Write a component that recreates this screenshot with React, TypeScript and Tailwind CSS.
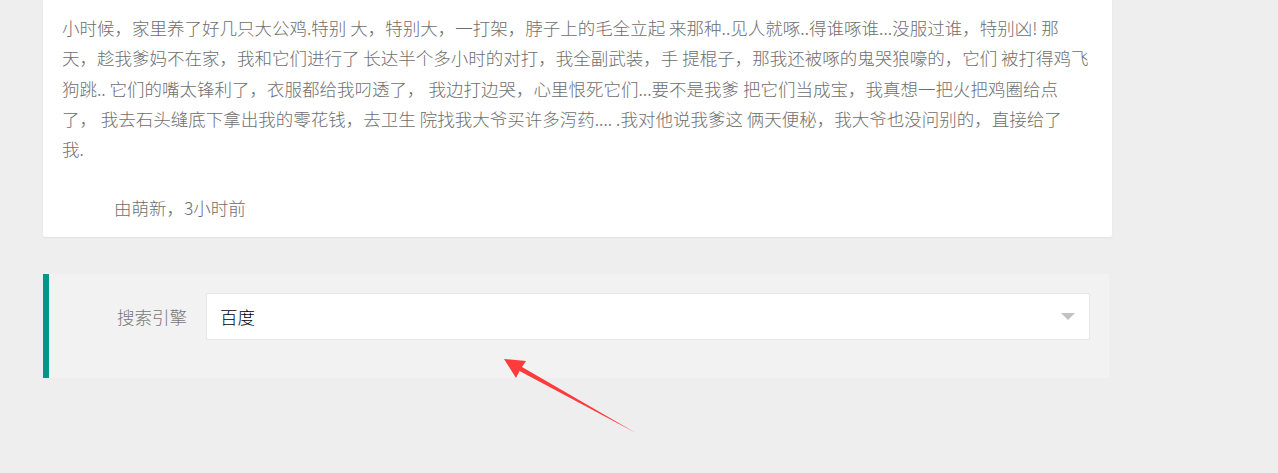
import React from "react";

const lines = [
  "小时候，家里养了好几只大公鸡.特别 大，特别大，一打架，脖子上的毛全立起 来那种..见人就啄..得谁啄谁...没服过谁，特别凶! 那",
  "天，趁我爹妈不在家，我和它们进行了 长达半个多小时的对打，我全副武装，手 提棍子，那我还被啄的鬼哭狼嚎的，它们 被打得鸡飞",
  "狗跳.. 它们的嘴太锋利了，衣服都给我叼透了， 我边打边哭，心里恨死它们...要不是我爹 把它们当成宝，我真想一把火把鸡圈给点",
  "了， 我去石头缝底下拿出我的零花钱，去卫生 院找我大爷买许多泻药.... .我对他说我爹这 俩天便秘，我大爷也没问别的，直接给了",
  "我.",
];

function Arrow() {
  // red annotation arrow pointing at the select
  return (
    <svg
      className="pointer-events-none absolute left-0 top-0"
      width="1278"
      height="473"
      viewBox="0 0 1278 473"
    >
      <polygon
        points="504,359 526,361 522,367 636,433 519.5,371 516,378"
        fill="#ff3b3b"
      />
    </svg>
  );
}

export default function App() {
  return (
    <div
      className="relative h-[473px] w-[1278px] overflow-hidden bg-[#eeeeee] pl-[43px]"
      style={{ fontFamily: '"Noto Sans CJK SC", "Noto Sans", sans-serif' }}
    >
      {/* 文章卡片 */}
      <div className="w-[1069px] rounded-b-[2px] bg-white pb-[14px] pl-[19px] pt-[13px] shadow-[0_1px_2px_0_rgba(0,0,0,0.06)]">
        <div className="text-[17.5px] font-light leading-[30.3px] text-[#6e6e6e]">
          {lines.map((l, i) => (
            <div key={i} className="whitespace-nowrap">
              {l}
            </div>
          ))}
        </div>
        <div className="mt-[29px] pl-[52px] text-[17.5px] font-light leading-[30px] text-[#6e6e6e]">
          由萌新，3小时前
        </div>
      </div>

      {/* 搜索引擎 */}
      <div className="mt-[37px] flex h-[104px] w-[1066px] items-start border-l-[6px] border-[#009688] bg-[#f2f2f2] pt-[19px]">
        <div className="flex h-[47px] w-[138px] items-center justify-end text-[17.5px] font-light text-[#777]">
          搜索引擎
        </div>
        <div className="ml-[19px] flex h-[47px] w-[884px] items-center justify-between rounded-[2px] border border-[#e6e6e6] bg-white pl-[13px] pr-[14px]">
          <span className="text-[17.5px] font-light text-black">百度</span>
          <span className="h-0 w-0 border-x-[7px] border-t-[7px] border-x-transparent border-t-[#c2c2c2]" />
        </div>
      </div>

      <Arrow />
    </div>
  );
}
